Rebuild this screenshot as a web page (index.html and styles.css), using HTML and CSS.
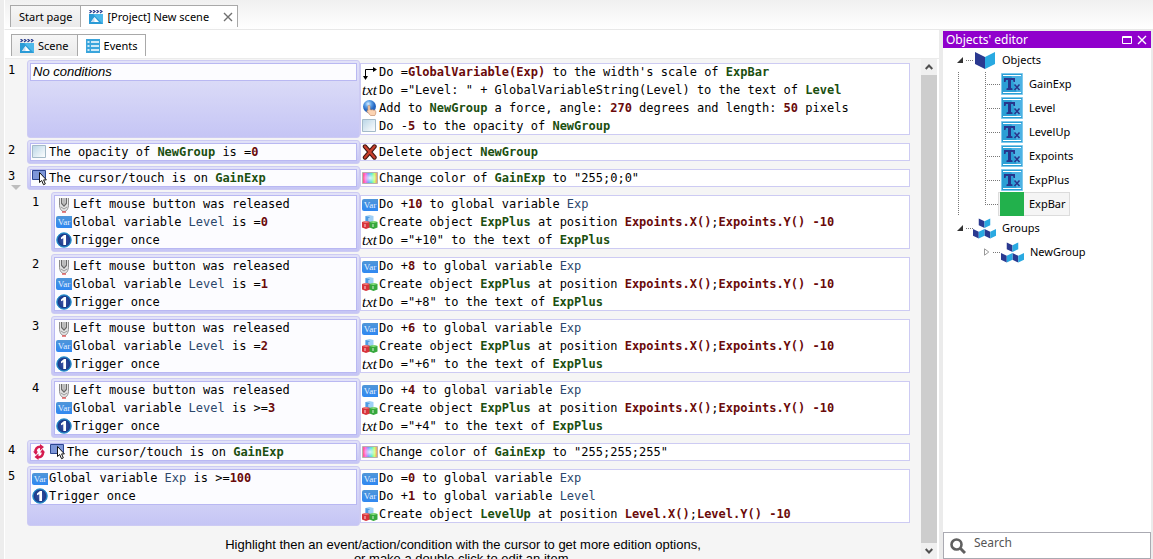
FILE: index.html
```html
<!DOCTYPE html>
<html lang="en">
<head>
<meta charset="utf-8">
<title>[Project] New scene</title>
<link rel="stylesheet" href="styles.css">
</head>
<body>
<svg class="defs" aria-hidden="true">
  <defs>
    <linearGradient id="gOp" x1="0" y1="0" x2="1" y2="1"><stop offset="0" stop-color="#b9d5e6"/><stop offset="1" stop-color="#ffffff"/></linearGradient>
    <radialGradient id="gOnce"><stop offset="0" stop-color="#4054a6"/><stop offset=".75" stop-color="#1c3c8c"/><stop offset="1" stop-color="#2fa0d8"/></radialGradient>
    <linearGradient id="gHue"><stop offset="0" stop-color="#ff5a6a"/><stop offset=".2" stop-color="#ff6de0"/><stop offset=".4" stop-color="#6f9cff"/><stop offset=".6" stop-color="#4fe6d0"/><stop offset=".8" stop-color="#c8ff70"/><stop offset="1" stop-color="#ff8866"/></linearGradient>
    <radialGradient id="gWhite"><stop offset="0" stop-color="#fff" stop-opacity=".8"/><stop offset="1" stop-color="#fff" stop-opacity="0"/></radialGradient>
    <radialGradient id="gBall" cx=".4" cy=".3"><stop offset="0" stop-color="#d8ecff"/><stop offset=".5" stop-color="#5b9fe6"/><stop offset="1" stop-color="#2365c0"/></radialGradient>
  </defs>
  <symbol id="i-once" viewBox="0 0 16 16"><circle cx="8" cy="8" r="7.6" fill="url(#gOnce)"/><circle cx="8" cy="8" r="7.2" fill="none" stroke="#2a8fcd" stroke-width=".8"/><path fill="#fff" d="M5 5.500 8 3h2v10H7.300V6.300L5 7.300z"/></symbol>
  <symbol id="i-mouse" viewBox="0 0 16 16"><path fill="#e4e4e4" stroke="#8c8c8c" d="M3.500 1v6c0 5 2 7.500 4.500 7.500s4.500-2.500 4.500-7.500V1"/><path fill="#fff" stroke="#6a6a6a" stroke-width="1.400" d="M5.700 1v5.500L8 9l2.300-2.500V1"/><path stroke="#777" d="M8 1v6"/><path fill="none" stroke="#999" d="m5 10 3 2 3-2"/><path stroke="#e06060" stroke-width="1.500" d="M6 15h4"/></symbol>
  <symbol id="i-opacity" viewBox="0 0 16 16"><path fill="url(#gOp)" stroke="#a4bac8" d="M.5 1.500h13v12H.5z"/></symbol>
  <symbol id="i-cursor" viewBox="0 0 16 16"><path fill="#7d96d8" stroke="#2c4690" d="M.5.5h13v9H.5z"/><path fill="#fff" stroke="#111" d="M7.500 2.500v10l2.200-2 1.800 4.200 1.800-.8-1.700-4h2.800z"/></symbol>
  <symbol id="i-loop" viewBox="0 0 16 16"><g fill="none" stroke="#d51b50" stroke-width="2.600"><path d="M8.500 2.800C5 2.500 3 5 3.600 8.500"/><path d="M6 13.200c3.500.3 5.500-2.200 4.900-5.700"/></g><g fill="#d51b50"><path d="M8 0l4 3-4 3.500zM6.500 9.500v6.500l-4-3zM1 7.500h5L4 11zM13 8.500H8L10.500 5z"/></g></symbol>
  <symbol id="i-scale" viewBox="0 0 16 16"><path d="M3.500 12V4.500H12" fill="none" stroke="#000"/><path d="M11 2 15 4.500 11 7zM1 11h5l-2.500 4z"/></symbol>
  <symbol id="i-force" viewBox="0 0 16 16"><circle cx="7.500" cy="6.500" r="6.500" fill="url(#gBall)"/><path fill="#fbd3b2" stroke="#c58e6c" stroke-width=".7" d="M6 6.500c0-1.300 2-1.300 2 0V10c1-.8 1.500 0 1.800 0 1-.5 1.500 0 2 .3 1-.3 2 .2 2 1.500 0 2-.3 2.500-1 3.700H8.500L5 11.500c-.4-1 .5-1.200 1-.7z"/></symbol>
  <symbol id="i-delete" viewBox="0 0 16 16"><path d="M3 2.500 12.500 13.500M12.500 2.500 3 13.500" stroke="#3c1510" stroke-width="4.400" stroke-linecap="round"/><path d="M3 2.500 12.500 13.500M12.500 2.500 3 13.500" stroke="#c8402c" stroke-width="2.400" stroke-linecap="round"/></symbol>
  <symbol id="i-color" viewBox="0 0 16 16"><path fill="url(#gHue)" stroke="#b5b0b0" d="M.5 2.500h15v11H.5z"/><path fill="url(#gWhite)" d="M1 3h14v10H1z"/></symbol>
  <symbol id="i-create" viewBox="0 0 16 16"><path fill="#9fd0f6" d="m7.500 1 4 1v6l-4 1-4-1V2z"/><path fill="#4f9ce4" d="M7.500 3v6l-4-1V2z"/><path fill="#d8333c" d="m4 7 4 1v5.500L4 15l-4-1.500V8z"/><path fill="#ee8080" d="m4 7 4 1-4 1-4-1z"/><path fill="#36a83c" d="m11.500 7 4 1v5.500l-4 1.500-4-1.500V8z"/><path fill="#8ade80" d="m11.500 7 4 1-4 1-4-1z"/><path stroke="#fff" stroke-opacity=".8" d="M3 10v3M11 10v3M7 4v3"/></symbol>
  <symbol id="i-clap" viewBox="0 0 14 14"><path fill="#2b9bd6" d="M0 4h14v10H0z"/><path fill="#4db8ea" d="M4 4h10v10z"/><path fill="#fff" d="m2 12 3.500-5L10 12z"/><path fill="#c9ddf0" d="m2 12 3.500-5v5z"/><path d="m.5 0 2 1.500-2 1.500M4 0l2 1.500L4 3M7.500 0l2 1.500-2 1.500M11 0l2 1.500L11 3" fill="none" stroke="#2d3f8e" stroke-width="1.300"/></symbol>
  <symbol id="i-list" viewBox="0 0 14 14"><path fill="#3aa5dc" d="M0 0h14v14H0z"/><path stroke="#fff" stroke-width="1.600" d="M1.500 3h2M5 3h8M1.500 7h2M5 7h8M1.500 11h2M5 11h8"/></symbol>
  <symbol id="i-book" viewBox="0 0 20 20"><path fill="#2a3990" d="M0 2 10 7v12L0 14z"/><path fill="#29a9e1" d="M20 2 10 7v12l10-5z"/></symbol>
  <symbol id="i-group" viewBox="0 0 24 22"><g fill="#2a3990"><path d="m6 1 6 3v7L6 8zM0 12l6 3v7l-6-3zM12 12l6 3v7l-6-3z"/></g><g fill="#29a9e1"><path d="m18 1-6 3v7l6-3zM12 12l-6 3v7l6-3zM24 12l-6 3v7l6-3z"/></g></symbol>
  <symbol id="i-text" viewBox="0 0 22 22"><path fill="#2b9fd5" d="M.5.5h21v21H.5z"/><path fill="#4cb2e4" d="M10 2h11v18H16z"/><path fill="none" stroke="#7ec9ec" d="M.5.5h21v21H.5z"/><path stroke="#fff" d="M2 2.500h18M2 19.500h18"/><path fill="#28368c" d="M3 5h11v4h-1.500L12 7h-2v8l1.500.5V17H5.500v-1.500L7 15V7H5l-.5 2H3z"/><path fill="none" stroke="#28368c" stroke-width="1.600" d="m13.500 11.500 5 5.500M18.500 11.500l-5 5.500"/></symbol>
  <symbol id="i-bar" viewBox="0 0 24 24"><path fill="#22b14c" d="M0 0h24v24H0z"/></symbol>
  <symbol id="i-close" viewBox="0 0 10 10"><path fill="none" stroke="currentColor" stroke-width="1.400" d="m1 1 8 8M9 1 1 9"/></symbol>
  <symbol id="i-max" viewBox="0 0 10 10"><path fill="none" stroke="currentColor" d="M.5 1.500h9v7h-9zM0 2.500h10"/></symbol>
  <symbol id="i-up" viewBox="0 0 8 6"><path fill="none" stroke="#505050" stroke-width="2" d="m.7 5 3.300-3.500L7.300 5"/></symbol>
  <symbol id="i-down" viewBox="0 0 8 6"><path fill="none" stroke="#505050" stroke-width="2" d="M.7 1 4 4.500 7.300 1"/></symbol>
  <symbol id="i-open" viewBox="0 0 6 6"><path fill="#333" d="M6 0v6H0z"/></symbol>
  <symbol id="i-shut" viewBox="0 0 6 8"><path fill="#fff" stroke="#999" d="M.5.8 4.800 4 .5 7.200z"/></symbol>
  <symbol id="i-find" viewBox="0 0 16 16"><circle cx="6.500" cy="6.500" r="5" fill="none" stroke="#606060" stroke-width="2.600"/><path stroke="#606060" stroke-width="3" d="m10.500 10.500 4.500 4.500"/></symbol>
</svg>

<div class="app">
  <nav class="tabs tabs-outer">
    <button class="tab">Start page</button>
    <button class="tab active"><svg class="ico"><use href="#i-clap"/></svg>[Project] New scene<svg class="tab-close"><use href="#i-close"/></svg></button>
  </nav>

  <div class="work">
    <main class="scene">
      <nav class="tabs tabs-inner">
        <button class="tab"><svg class="ico"><use href="#i-clap"/></svg>Scene</button>
        <button class="tab active"><svg class="ico"><use href="#i-list"/></svg>Events</button>
      </nav>
      <div class="sheet">
        <div class="events">
          <section class="event">
            <span class="num">1</span>
            <div class="cond"><div class="box"><p class="line none">No conditions</p></div></div>
            <div class="box acts">
              <p class="line"><svg class="ico"><use href="#i-scale"/></svg>Do =<b class="num-v">GlobalVariable(Exp)</b> to the width's scale of <b class="obj">ExpBar</b></p>
              <p class="line"><span class="ico txt">txt</span>Do ="Level: " + GlobalVariableString(Level) to the text of <b class="obj">Level</b></p>
              <p class="line"><svg class="ico"><use href="#i-force"/></svg>Add to <b class="obj">NewGroup</b> a force, angle: <b class="num-v">270</b> degrees and length: <b class="num-v">50</b> pixels</p>
              <p class="line"><svg class="ico"><use href="#i-opacity"/></svg>Do -<b class="num-v">5</b> to the opacity of <b class="obj">NewGroup</b></p>
            </div>
          </section>
          <section class="event">
            <span class="num">2</span>
            <div class="cond"><div class="box"><p class="line"><svg class="ico"><use href="#i-opacity"/></svg>The opacity of <b class="obj">NewGroup</b> is =<b class="num-v">0</b></p></div></div>
            <div class="box acts"><p class="line"><svg class="ico"><use href="#i-delete"/></svg>Delete object <b class="obj">NewGroup</b></p></div>
          </section>
          <section class="event">
            <span class="num fold">3</span>
            <div class="cond"><div class="box"><p class="line"><svg class="ico"><use href="#i-cursor"/></svg>The cursor/touch is on <b class="obj">GainExp</b></p></div></div>
            <div class="box acts"><p class="line"><svg class="ico"><use href="#i-color"/></svg>Change color of <b class="obj">GainExp</b> to "255;0;0"</p></div>
          </section>
          <section class="event sub">
            <span class="num">1</span>
            <div class="cond"><div class="box">
              <p class="line"><svg class="ico"><use href="#i-mouse"/></svg>Left mouse button was released</p>
              <p class="line"><span class="ico badge">Var</span>Global variable <span class="var">Level</span> is =<b class="num-v">0</b></p>
              <p class="line"><svg class="ico"><use href="#i-once"/></svg>Trigger once</p>
            </div></div>
            <div class="box acts">
              <p class="line"><span class="ico badge">Var</span>Do +<b class="num-v">10</b> to global variable <span class="var">Exp</span></p>
              <p class="line"><svg class="ico"><use href="#i-create"/></svg>Create object <b class="obj">ExpPlus</b> at position <b class="num-v">Expoints.X()</b>;<b class="num-v">Expoints.Y() -10</b></p>
              <p class="line"><span class="ico txt">txt</span>Do ="+10" to the text of <b class="obj">ExpPlus</b></p>
            </div>
          </section>
          <section class="event sub">
            <span class="num">2</span>
            <div class="cond"><div class="box">
              <p class="line"><svg class="ico"><use href="#i-mouse"/></svg>Left mouse button was released</p>
              <p class="line"><span class="ico badge">Var</span>Global variable <span class="var">Level</span> is =<b class="num-v">1</b></p>
              <p class="line"><svg class="ico"><use href="#i-once"/></svg>Trigger once</p>
            </div></div>
            <div class="box acts">
              <p class="line"><span class="ico badge">Var</span>Do +<b class="num-v">8</b> to global variable <span class="var">Exp</span></p>
              <p class="line"><svg class="ico"><use href="#i-create"/></svg>Create object <b class="obj">ExpPlus</b> at position <b class="num-v">Expoints.X()</b>;<b class="num-v">Expoints.Y() -10</b></p>
              <p class="line"><span class="ico txt">txt</span>Do ="+8" to the text of <b class="obj">ExpPlus</b></p>
            </div>
          </section>
          <section class="event sub">
            <span class="num">3</span>
            <div class="cond"><div class="box">
              <p class="line"><svg class="ico"><use href="#i-mouse"/></svg>Left mouse button was released</p>
              <p class="line"><span class="ico badge">Var</span>Global variable <span class="var">Level</span> is =<b class="num-v">2</b></p>
              <p class="line"><svg class="ico"><use href="#i-once"/></svg>Trigger once</p>
            </div></div>
            <div class="box acts">
              <p class="line"><span class="ico badge">Var</span>Do +<b class="num-v">6</b> to global variable <span class="var">Exp</span></p>
              <p class="line"><svg class="ico"><use href="#i-create"/></svg>Create object <b class="obj">ExpPlus</b> at position <b class="num-v">Expoints.X()</b>;<b class="num-v">Expoints.Y() -10</b></p>
              <p class="line"><span class="ico txt">txt</span>Do ="+6" to the text of <b class="obj">ExpPlus</b></p>
            </div>
          </section>
          <section class="event sub">
            <span class="num">4</span>
            <div class="cond"><div class="box">
              <p class="line"><svg class="ico"><use href="#i-mouse"/></svg>Left mouse button was released</p>
              <p class="line"><span class="ico badge">Var</span>Global variable <span class="var">Level</span> is &gt;=<b class="num-v">3</b></p>
              <p class="line"><svg class="ico"><use href="#i-once"/></svg>Trigger once</p>
            </div></div>
            <div class="box acts">
              <p class="line"><span class="ico badge">Var</span>Do +<b class="num-v">4</b> to global variable <span class="var">Exp</span></p>
              <p class="line"><svg class="ico"><use href="#i-create"/></svg>Create object <b class="obj">ExpPlus</b> at position <b class="num-v">Expoints.X()</b>;<b class="num-v">Expoints.Y() -10</b></p>
              <p class="line"><span class="ico txt">txt</span>Do ="+4" to the text of <b class="obj">ExpPlus</b></p>
            </div>
          </section>
          <section class="event">
            <span class="num">4</span>
            <div class="cond"><div class="box"><p class="line"><svg class="ico"><use href="#i-loop"/></svg><svg class="ico"><use href="#i-cursor"/></svg>The cursor/touch is on <b class="obj">GainExp</b></p></div></div>
            <div class="box acts"><p class="line"><svg class="ico"><use href="#i-color"/></svg>Change color of <b class="obj">GainExp</b> to "255;255;255"</p></div>
          </section>
          <section class="event">
            <span class="num">5</span>
            <div class="cond"><div class="box">
              <p class="line"><span class="ico badge">Var</span>Global variable <span class="var">Exp</span> is &gt;=<b class="num-v">100</b></p>
              <p class="line"><svg class="ico"><use href="#i-once"/></svg>Trigger once</p>
            </div></div>
            <div class="box acts">
              <p class="line"><span class="ico badge">Var</span>Do =<b class="num-v">0</b> to global variable <span class="var">Exp</span></p>
              <p class="line"><span class="ico badge">Var</span>Do +<b class="num-v">1</b> to global variable <span class="var">Level</span></p>
              <p class="line"><svg class="ico"><use href="#i-create"/></svg>Create object <b class="obj">LevelUp</b> at position <b class="num-v">Level.X()</b>;<b class="num-v">Level.Y() -10</b></p>
            </div>
          </section>
          <p class="help">Highlight then an event/action/condition with the cursor to get more edition options,<br>or make a double click to edit an item.</p>
        </div>
        <div class="scroll">
          <button class="scroll-btn" aria-label="Scroll up"><svg><use href="#i-up"/></svg></button>
          <div class="thumb"></div>
          <button class="scroll-btn" aria-label="Scroll down"><svg><use href="#i-down"/></svg></button>
        </div>
      </div>
    </main>

    <aside class="panel">
      <header class="panel-head">
        <h2>Objects' editor</h2>
        <button aria-label="Maximize"><svg><use href="#i-max"/></svg></button>
        <button aria-label="Close"><svg><use href="#i-close"/></svg></button>
      </header>
      <ul class="tree">
        <li class="branch">
          <div class="root"><svg class="toggle"><use href="#i-open"/></svg><i class="dash"></i><svg class="t-ico book"><use href="#i-book"/></svg>Objects</div>
          <ul class="kids">
            <li class="leaf"><i class="dash"></i><span class="entry"><svg class="t-ico"><use href="#i-text"/></svg>GainExp</span></li>
            <li class="leaf"><i class="dash"></i><span class="entry"><svg class="t-ico"><use href="#i-text"/></svg>Level</span></li>
            <li class="leaf"><i class="dash"></i><span class="entry"><svg class="t-ico"><use href="#i-text"/></svg>LevelUp</span></li>
            <li class="leaf"><i class="dash"></i><span class="entry"><svg class="t-ico"><use href="#i-text"/></svg>Expoints</span></li>
            <li class="leaf"><i class="dash"></i><span class="entry"><svg class="t-ico"><use href="#i-text"/></svg>ExpPlus</span></li>
            <li class="leaf last"><i class="dash"></i><span class="entry selected"><svg class="t-ico bar"><use href="#i-bar"/></svg>ExpBar</span></li>
          </ul>
        </li>
        <li class="branch">
          <div class="root"><svg class="toggle"><use href="#i-open"/></svg><i class="dash"></i><svg class="t-ico group"><use href="#i-group"/></svg>Groups</div>
          <ul class="kids plain">
            <li class="leaf nested"><svg class="toggle"><use href="#i-shut"/></svg><i class="dash"></i><span class="entry"><svg class="t-ico group"><use href="#i-group"/></svg>NewGroup</span></li>
          </ul>
        </li>
      </ul>
      <label class="search"><svg><use href="#i-find"/></svg><input type="text" placeholder="Search" aria-label="Search"></label>
    </aside>
  </div>
</div>
</body>
</html>
```
FILE: styles.css
```css
* { box-sizing: border-box; }
html, body { height: 100%; }
body {
  margin: 0;
  overflow: hidden;
  background: #ededed;
  color: #000;
  font: 11px/16px "Noto Sans", "Open Sans", sans-serif;
}
p, h2, ul { margin: 0; padding: 0; }
ul { list-style: none; }
button { font: inherit; color: inherit; border: 0; padding: 0; background: none; }
svg { display: block; flex: none; }
.defs { position: absolute; width: 0; height: 0; }

.app { height: 100vh; display: flex; flex-direction: column; padding-left: 4px; }

/* tabs */
.tabs { display: flex; align-items: flex-end; flex: none; }
.tabs-outer {
  height: 30px;
  padding: 5px 0 2px 5px;
  background: linear-gradient(#f0f0f0, #fff);
  border-left: 1px solid #fff;
  border-bottom: 1px solid #e8e8e8;
}
.tabs-inner { height: 29px; padding: 4px 0 2px 6px; background: #fff; border-bottom: 1px solid #ebebeb; }
.tab {
  display: flex;
  align-items: center;
  gap: 4px;
  height: 22px;
  padding: 0 8px;
  border: 1px solid #a9a9a9;
  border-bottom: 0;
  background: linear-gradient(#f6f6f6, #eaeaea);
}
.tab + .tab { margin-left: -1px; }
.tab.active { background: #fff; }
.tabs .ico { width: 14px; height: 14px; }
.tab-close { width: 10px; height: 10px; margin: 0 -4px 0 10px; color: #707070; }

.work { flex: 1; min-height: 0; display: flex; }
.scene { flex: 1; min-width: 0; display: flex; flex-direction: column; border-left: 1px solid #fff; }

/* event sheet */
.sheet { flex: 1; min-height: 0; display: flex; background: #f5f5f5; border-right: 2px solid #fff; }
.events {
  flex: 1;
  min-width: 0;
  overflow: hidden;
  display: flex;
  flex-direction: column;
  gap: 2px;
  padding: 1px 11px 0 2px;
  font: 12px/18px "DejaVu Sans Mono", monospace;
}
.event { display: grid; flex: none; grid-template-columns: 20px 333px 1fr; }
.event.sub { grid-template-columns: 44px 309px 1fr; }
.num { padding-left: 1px; line-height: 20px; }
.sub .num { padding-left: 25px; }
.fold::after {
  content: "";
  display: block;
  width: 0;
  margin: -1px 0 0 3px;
  border: 5px solid transparent;
  border-top-color: #bdbdbd;
  border-bottom: 0;
}
.cond {
  padding: 2px;
  border: 1px solid #cdcbf3;
  border-radius: 3px;
  background: linear-gradient(#e2e2f8, #c5c5f5);
}
.box { border: 1px solid #b9b8f2; background: #fcfcff; }
.acts { margin: 3px 0; border-color: #cdcbf3; background: #fff; }
.line { display: flex; align-items: center; height: 18px; line-height: 18px; white-space: pre; }
.box .line:first-child { height: 17px; line-height: 17px; }
.box .line:last-child { height: 17px; }
.box .line:only-child { height: 16px; line-height: 16px; }
.line .ico { flex: none; width: 16px; height: 16px; margin: 0 1px; }
.line.none { padding-left: 2px; font: italic 13px/16px "Liberation Sans", sans-serif; }
.line .txt { font: italic 15px/16px "Liberation Serif", serif; }
.line .badge {
  height: 12px;
  border-radius: 2px 0 0 2px;
  background: linear-gradient(#5096d8, #2f88f2);
  color: #e8f2ff;
  text-align: center;
  font: 9px/12px "Liberation Serif", serif;
}
.obj { color: #1b4f10; }
.num-v { color: #6a0a0a; }
.var { color: #2b466b; }
.help { margin: 10px -9px 0 0; text-align: center; font: 13px/14px "Liberation Sans", sans-serif; }

/* scrollbar */
.scroll { width: 16px; display: flex; flex-direction: column; background: #cdcdcd; }
.scroll-btn { height: 16px; background: #f0f0f0; display: grid; place-items: center; }
.scroll-btn svg { width: 8px; height: 6px; }
.thumb { flex: 1; }

/* objects panel */
.panel {
  width: 214px;
  flex: none;
  display: flex;
  flex-direction: column;
  background: #fff;
  border: solid #ebebeb;
  border-width: 1px 2px 0 4px;
}
.panel-head { display: flex; align-items: center; gap: 5px; height: 17px; padding: 0 4px 0 3px; background: #9000cc; color: #fff; }
.panel-head h2 { flex: 1; font-weight: 400; font-size: 12px; line-height: 16px; }
.panel-head svg { width: 10px; height: 10px; }
.tree { flex: 1; }
.root, .leaf { display: flex; align-items: center; height: 24px; }
.root { padding-left: 14px; }
.toggle { width: 6px; height: 6px; }
.dash { height: 1px; width: 7px; margin: 0 2px 0 3px; background: repeating-linear-gradient(90deg, #777 0 1px, #fff 1px 2px); }
.t-ico { width: 22px; height: 22px; }
.book { width: 20px; height: 20px; margin-right: 7px; }
.group { width: 23px; }
.root .group { margin: 0 6px 0 -2px; }
.kids { background: repeating-linear-gradient(#777 0 1px, #fff 1px 2px) 15px 0 / 1px 100% no-repeat; }
.kids.plain { background: none; }
.leaf { padding-left: 42px; background: repeating-linear-gradient(#777 0 1px, #fff 1px 2px) 42px 0 / 1px 100% no-repeat; }
.leaf.last { background-size: 1px 12px; }
.leaf .dash { width: 15px; margin: 0 -2px 0 0; }
.entry { display: flex; align-items: center; gap: 6px; height: 24px; padding: 0 3px 0 2px; border: 1px solid transparent; }
.entry.selected { padding-left: 1px; gap: 5px; background: #f5f5f5; border-color: #dcdcdc; }
.bar { width: 24px; height: 24px; }
.leaf.nested { padding-left: 41px; background: none; }
.nested .toggle { height: 8px; }
.nested .dash { width: 8px; margin: 0 -2px 0 3px; }
.nested .entry { padding-left: 1px; }
.search { display: flex; align-items: center; gap: 8px; height: 27px; padding: 0 6px; border: 1px solid #aaaab2; }
.search svg { width: 16px; height: 16px; }
.search input { flex: 1; min-width: 0; padding: 0 0 5px; border: 0; outline: 0; background: none; font: inherit; font-size: 12px; color: #555; }
.search input::placeholder { color: #555; opacity: 1; }
```
